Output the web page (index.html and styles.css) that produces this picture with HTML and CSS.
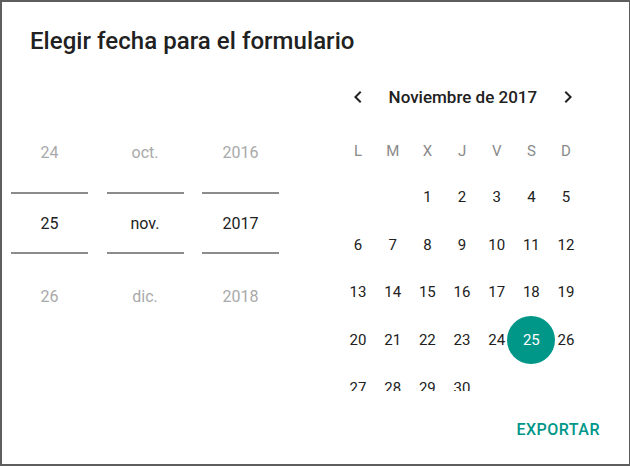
FILE: index.html
```html
<!DOCTYPE html>
<html lang="es">
<head>
<meta charset="utf-8">
<title>Elegir fecha</title>
<link rel="stylesheet" href="styles.css">
</head>
<body>
<div class="dialog">
  <h1 class="title">Elegir fecha para el formulario</h1>
  <div class="content">
    <div class="spinners">
      <div class="spinner">
        <div class="item faded">24</div>
        <div class="item current">25</div>
        <div class="item faded">26</div>
      </div>
      <div class="spinner">
        <div class="item faded">oct.</div>
        <div class="item current">nov.</div>
        <div class="item faded">dic.</div>
      </div>
      <div class="spinner">
        <div class="item faded">2016</div>
        <div class="item current">2017</div>
        <div class="item faded">2018</div>
      </div>
    </div>
    <div class="calendar">
      <div class="cal-header">
        <button class="nav" aria-label="Mes anterior">
          <svg viewBox="0 0 24 24" width="24" height="24"><path d="M15.41 7.41L14 6l-6 6 6 6 1.41-1.41L10.83 12z"/></svg>
        </button>
        <div class="month">Noviembre de 2017</div>
        <button class="nav" aria-label="Mes siguiente">
          <svg viewBox="0 0 24 24" width="24" height="24"><path d="M10 6L8.59 7.41 13.17 12l-4.58 4.59L10 18l6-6z"/></svg>
        </button>
      </div>
      <div class="dow">
        <span>L</span><span>M</span><span>X</span><span>J</span><span>V</span><span>S</span><span>D</span>
      </div>
      <div class="days">
        <span class="day"></span><span class="day"></span>
        <span class="day">1</span><span class="day">2</span><span class="day">3</span><span class="day">4</span><span class="day">5</span>
        <span class="day">6</span><span class="day">7</span><span class="day">8</span><span class="day">9</span><span class="day">10</span><span class="day">11</span><span class="day">12</span>
        <span class="day">13</span><span class="day">14</span><span class="day">15</span><span class="day">16</span><span class="day">17</span><span class="day">18</span><span class="day">19</span>
        <span class="day">20</span><span class="day">21</span><span class="day">22</span><span class="day">23</span><span class="day">24</span><span class="day"><span class="selected">25</span></span><span class="day">26</span>
        <span class="day">27</span><span class="day">28</span><span class="day">29</span><span class="day">30</span>
      </div>
    </div>
  </div>
  <div class="actions">
    <button class="action">EXPORTAR</button>
  </div>
</div>
</body>
</html>
```

FILE: styles.css
```css
* { box-sizing: border-box; }

html, body {
  margin: 0;
  padding: 0;
  width: 630px;
  height: 466px;
  overflow: hidden;
}

body {
  background: #5e5e5e;
  font-family: Roboto, "Noto Sans", "Liberation Sans", sans-serif;
  padding: 2px 1px 2px 2px;
}

.dialog {
  background: #ffffff;
  width: 627px;
  height: 462px;
  display: flex;
  flex-direction: column;
  overflow: hidden;
}

.title {
  margin: 23px 0 0 28px;
  font-size: 24px;
  line-height: 32px;
  font-weight: 500;
  color: #212121;
  letter-spacing: 0.05px;
}

.content {
  display: flex;
  margin-top: 20px;
  padding-left: 9px;
  height: 314px;
}

.spinners {
  display: flex;
  gap: 18.5px;
  width: 268px;
  padding-top: 45px;
}

.spinner {
  width: 77px;
  display: flex;
  flex-direction: column;
}

.item {
  height: 60px;
  display: flex;
  align-items: center;
  justify-content: center;
  font-size: 16px;
}

.item.faded { color: #a9a9a9; }

.item.current {
  color: #212121;
  height: 62px;
  margin: 10px 0 12px;
  border-top: 2px solid #8c8c8c;
  border-bottom: 2px solid #8c8c8c;
  padding-top: 1px;
}

.calendar {
  margin-left: 61.7px;
  width: 242.7px;
  overflow: hidden;
}

.cal-header {
  height: 40px;
  display: flex;
  align-items: center;
  padding: 0 3.3px 0 5px;
}

.nav {
  width: 24px;
  height: 24px;
  padding: 0;
  border: 0;
  background: none;
  display: flex;
}

.nav svg { fill: #212121; }

.month {
  flex: 1;
  text-align: center;
  font-size: 17px;
  font-weight: 500;
  color: #212121;
}

.dow {
  margin-top: 12px;
  height: 44px;
  display: grid;
  grid-template-columns: repeat(7, minmax(0, 1fr));
  align-items: center;
  font-size: 15px;
  color: #8a8a8a;
}

.dow span { text-align: center; padding-bottom: 1px; }

.days {
  display: grid;
  grid-template-columns: repeat(7, minmax(0, 1fr));
  grid-auto-rows: 47.75px;
  font-size: 15px;
  color: #212121;
}

.day {
  display: flex;
  align-items: center;
  justify-content: center;
  min-width: 0;
}

.selected {
  flex: none;
  width: 48px;
  height: 48px;
  border-radius: 50%;
  background: #009688;
  color: #ffffff;
  display: flex;
  align-items: center;
  justify-content: center;
}

.actions {
  display: flex;
  justify-content: flex-end;
  margin-top: 20px;
  padding-right: 21px;
}

.action {
  border: 0;
  background: none;
  font-family: inherit;
  font-size: 16px;
  font-weight: 500;
  color: #009688;
  padding: 0 8px;
  height: 36px;
  letter-spacing: 0.5px;
}
```
